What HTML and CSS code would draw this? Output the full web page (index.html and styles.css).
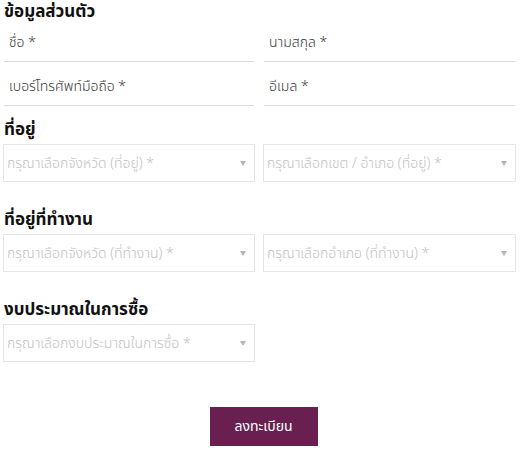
FILE: index.html
```html
<!DOCTYPE html>
<html lang="th">
<head>
<meta charset="utf-8">
<link rel="stylesheet" href="styles.css">
</head>
<body>
<form class="form">
  <h3 class="heading first">ข้อมูลส่วนตัว</h3>
  <div class="grid">
    <div class="field"><span class="label">ชื่อ *</span></div>
    <div class="field"><span class="label">นามสกุล *</span></div>
    <div class="field"><span class="label">เบอร์โทรศัพท์มือถือ *</span></div>
    <div class="field"><span class="label">อีเมล *</span></div>
  </div>

  <h3 class="heading">ที่อยู่</h3>
  <div class="grid selects">
    <div class="select"><span class="ph">กรุณาเลือกจังหวัด (ที่อยู่) *</span><span class="arrow"></span></div>
    <div class="select"><span class="ph">กรุณาเลือกเขต / อำเภอ (ที่อยู่) *</span><span class="arrow"></span></div>
  </div>

  <h3 class="heading">ที่อยู่ที่ทำงาน</h3>
  <div class="grid selects">
    <div class="select"><span class="ph">กรุณาเลือกจังหวัด (ที่ทำงาน) *</span><span class="arrow"></span></div>
    <div class="select"><span class="ph">กรุณาเลือกอำเภอ (ที่ทำงาน) *</span><span class="arrow"></span></div>
  </div>

  <h3 class="heading">งบประมาณในการซื้อ</h3>
  <div class="grid selects">
    <div class="select"><span class="ph">กรุณาเลือกงบประมาณในการซื้อ *</span><span class="arrow"></span></div>
  </div>

  <div class="actions">
    <button type="button" class="submit">ลงทะเบียน</button>
  </div>
</form>
</body>
</html>
```
FILE: styles.css
```css
* { box-sizing: border-box; }
html, body { margin: 0; padding: 0; background: #fff; }
body {
  font-family: "Noto Sans Thai", "Noto Sans", "DejaVu Sans", sans-serif;
  color: #333;
}
.form {
  display: flex;
  flex-direction: column;
  padding: 0 4px 0 3px;
  width: 520px;
}
.heading {
  font-size: 17px;
  font-weight: 700;
  color: #111;
  line-height: 24px;
  height: 24px;
  margin: 12px 0 0;
  padding-left: 1px;
}
.heading.first { margin-top: 0; margin-bottom: -6px; }
.grid {
  display: grid;
  grid-template-columns: 252px 253px;
  column-gap: 8px;
}
.grid.selects { margin-bottom: 14px; }
.field {
  height: 44px;
  margin: 0 1px;
  border-bottom: 1px solid #dcdcdc;
  display: flex;
  align-items: center;
  padding-left: 5px;
  padding-top: 6px;
}
.label { font-size: 14px; font-weight: 300; color: #3a3a3a; }
.select {
  height: 38px;
  border: 1px solid #e6e6e6;
  display: flex;
  align-items: center;
  justify-content: space-between;
  padding: 0 8px 0 3px;
  margin-top: 2px;
}
.ph { font-size: 14px; font-weight: 300; color: #c2c2c2; }
.arrow {
  width: 0; height: 0;
  border-left: 3px solid transparent;
  border-right: 3px solid transparent;
  border-top: 5px solid #b5b5b5;
}
.actions {
  display: flex;
  justify-content: center;
  margin-top: 31px;
  padding-left: 8px;
}
.submit {
  width: 108px;
  height: 39px;
  border: 0;
  background: #6a1f51;
  color: #fff;
  font-family: inherit;
  font-size: 14px;
  padding: 0;
}
```
